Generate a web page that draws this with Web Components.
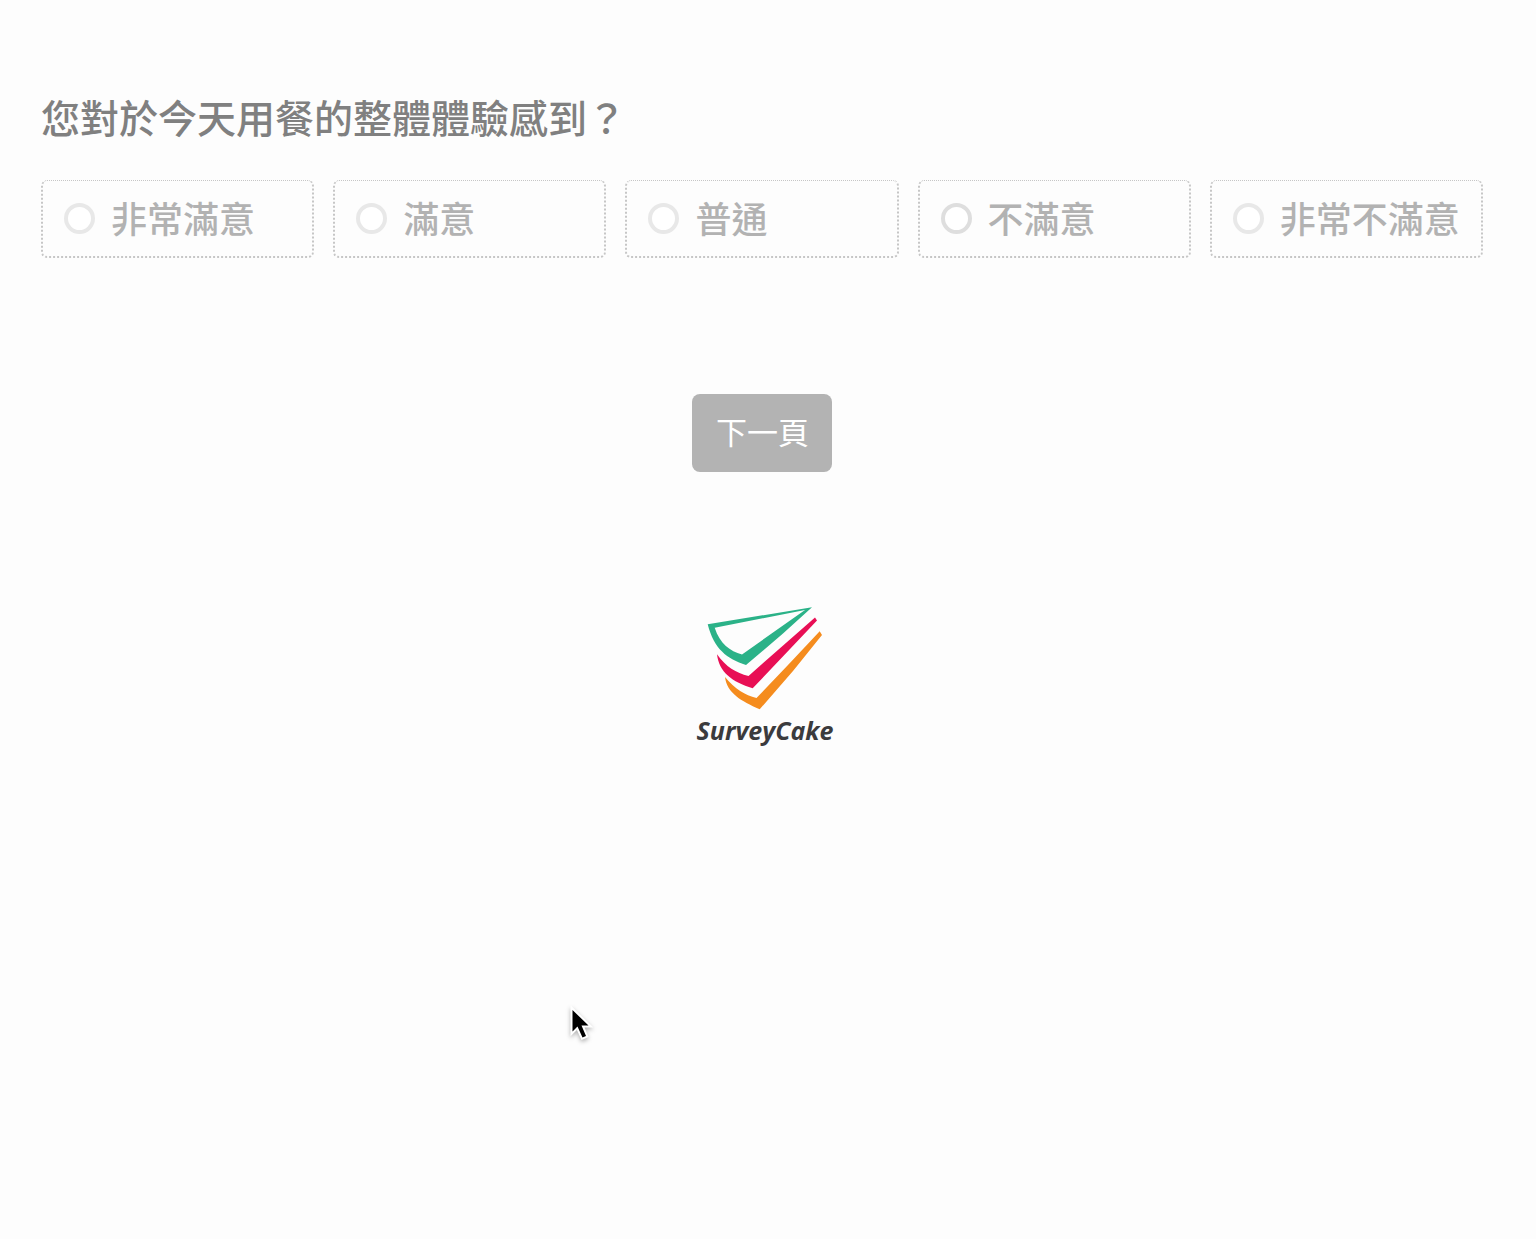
<!DOCTYPE html>
<html lang="zh-Hant">
<head>
<meta charset="utf-8">
<meta name="viewport" content="width=device-width, initial-scale=1">
<title>SurveyCake</title>
<style>
  html { background: #fdfdfd; }
  body {
    margin: 0;
    min-height: 100vh;
    font-family: "Noto Sans CJK TC", "Noto Sans", sans-serif;
    font-weight: 500;
  }
</style>
</head>
<body>
<survey-page>
  <survey-question label="您對於今天用餐的整體體驗感到？">
    <survey-option value="5">非常滿意</survey-option>
    <survey-option value="4">滿意</survey-option>
    <survey-option value="3">普通</survey-option>
    <survey-option value="2" active>不滿意</survey-option>
    <survey-option value="1">非常不滿意</survey-option>
  </survey-question>
  <survey-button slot="actions">下一頁</survey-button>
  <survey-brand slot="footer">SurveyCake</survey-brand>
</survey-page>
<mouse-pointer></mouse-pointer>

<script>
  class ShadowElement extends HTMLElement {
    constructor() {
      super();
      this.attachShadow({ mode: "open" }).innerHTML = this.constructor.markup;
    }
  }

  customElements.define("survey-page", class extends ShadowElement {
    static markup = `
      <style>
        :host { display: block; padding: 86px 53px 88px 41px; }
        .actions { display: flex; justify-content: center; margin-top: 136px; }
        footer { display: flex; justify-content: center; margin-top: 134px; padding-left: 6px; }
      </style>
      <main><slot></slot><div class="actions"><slot name="actions"></slot></div></main>
      <footer><slot name="footer"></slot></footer>`;
  });

  customElements.define("survey-question", class extends ShadowElement {
    static markup = `
      <style>
        :host { display: block; }
        fieldset { margin: 0; padding: 0; border: 0; min-width: 0; }
        legend { padding: 0; margin-bottom: 34px; font-size: 39px; line-height: 60px; color: #808080; }
        .options { display: grid; grid-template-columns: repeat(5, minmax(0, 1fr)); gap: 19px; }
      </style>
      <fieldset><legend></legend><div class="options"><slot></slot></div></fieldset>`;
    connectedCallback() {
      this.shadowRoot.querySelector("legend").textContent = this.getAttribute("label");
    }
  });

  customElements.define("survey-option", class extends ShadowElement {
    static markup = `
      <style>
        :host { display: block; --ring: #e8e8e8; }
        :host([active]) { --ring: #dedede; }
        label {
          display: flex; align-items: center; gap: 16px;
          box-sizing: border-box; min-height: 78px; padding: 0 20px 0 21px;
          border: 2px dotted #c6c6c6; border-top-width: 1px; border-radius: 6px;
          font-size: 36px; line-height: 54px; color: #b2b2b2;
          white-space: nowrap; cursor: pointer;
        }
        span { padding-bottom: 4px; }
        input {
          appearance: none; flex: none; box-sizing: border-box;
          width: 31px; height: 31px; margin: 0;
          border: 4px solid var(--ring); border-radius: 50%; background: #fff;
        }
        input:checked { background: #808080; }
      </style>
      <label><input type="radio" name="answer"><span><slot></slot></span></label>`;
    connectedCallback() {
      const input = this.shadowRoot.querySelector("input");
      input.value = this.getAttribute("value");
      input.addEventListener("change", () => {
        for (const other of this.parentElement.children)
          if (other !== this) other.shadowRoot.querySelector("input").checked = false;
      });
    }
  });

  customElements.define("survey-button", class extends ShadowElement {
    static markup = `
      <style>
        :host { display: block; }
        button {
          display: block; margin: 0; padding: 14px 23px 18px 24px; border: 0; border-radius: 8px;
          background: #b3b3b3; color: #fff; font: inherit; font-weight: 400;
          font-size: 31px; line-height: 46px; cursor: pointer;
        }
      </style>
      <button type="button"><slot></slot></button>`;
  });

  customElements.define("survey-brand", class extends ShadowElement {
    static markup = `
      <style>
        :host { display: block; }
        a {
          display: flex; flex-direction: column; align-items: center;
          color: #3b3b3d; text-decoration: none;
          font: italic 700 25px/40px "Open Sans", "Noto Sans", sans-serif;
        }
        svg { display: block; }
      </style>
      <a href="#">
        <svg width="116" height="104" viewBox="0 0 116 104" aria-hidden="true">
          <path fill="#2bb288" fill-rule="evenodd" d="M.7 18.300 105 1.300 76 27.500 39 59C20 53 7 43 .7 18.300ZM7.700 21.700C13 38 23 45 35 48.500L98 4Z"/>
          <path fill="#e80f55" d="M10 48.300C19 61 29 67 41.500 70L108 11.500 110 14.500 83 43 45.700 82.300C25 76 12 66 10 48.300Z"/>
          <path fill="#f58c1e" d="M18 71C28 83 38 89 49.500 92L81 59 112.700 25.300 115 29 86 65 52.700 103.300C34 95 20 87 18 71Z"/>
        </svg>
        <span><slot></slot></span>
      </a>`;
  });

  customElements.define("mouse-pointer", class extends ShadowElement {
    static markup = `
      <style>
        :host { position: absolute; left: 567px; top: 1004px; pointer-events: none; }
        svg { display: block; filter: drop-shadow(0 2px 2px rgba(0, 0, 0, .3)); }
      </style>
      <svg width="30" height="42" viewBox="0 0 30 42" aria-hidden="true">
        <path fill="#000" stroke="#fff" stroke-width="4" paint-order="stroke" d="M5.500 6V27.500L10.500 22.500 15.500 33.500 19 32 14.500 21.500H21.500Z"/>
      </svg>`;
  });
</script>
</body>
</html>
